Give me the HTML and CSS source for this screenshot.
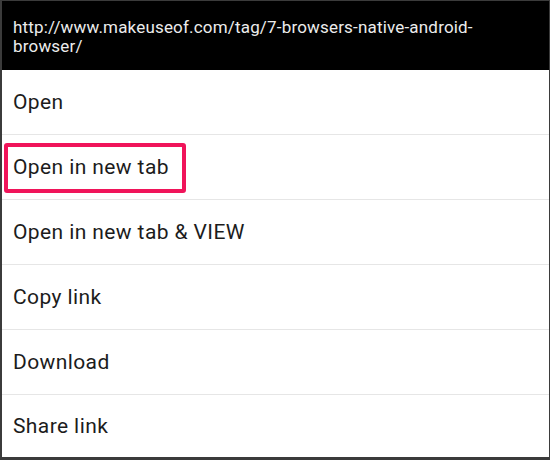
FILE: index.html
```html
<!DOCTYPE html>
<html>
<head>
<meta charset="utf-8">
<link rel="stylesheet" href="styles.css">
</head>
<body>
<div class="dialog">
  <div class="title">http://www.makeuseof.com/tag/7-browsers-native-android-<br>browser/</div>
  <ul class="menu">
    <li class="item">Open</li>
    <li class="item highlighted">Open in new tab<span class="mark"></span></li>
    <li class="item">Open in new tab &amp; VIEW</li>
    <li class="item">Copy link</li>
    <li class="item">Download</li>
    <li class="item">Share link</li>
  </ul>
</div>
</body>
</html>
```

FILE: styles.css
```css
html, body {
  margin: 0;
  padding: 0;
}
body {
  width: 550px;
  height: 460px;
  background: #3b3b3b;
  overflow: hidden;
  font-family: Roboto, "Noto Sans", sans-serif;
}
.dialog {
  margin: 1px 1px 0 2px;
  height: 456px;
  display: flex;
  flex-direction: column;
  background: #fff;
}
.title {
  background: #000;
  color: #ececec;
  height: 69px;
  box-sizing: border-box;
  padding: 17px 0 0 11px;
  font-size: 17px;
  line-height: 19px;
  letter-spacing: 0.18px;
}
.menu {
  list-style: none;
  margin: 0;
  padding: 0;
  flex: 1;
  display: flex;
  flex-direction: column;
}
.item {
  position: relative;
  height: 64px;
  flex: none;
  display: flex;
  align-items: center;
  padding-left: 11px;
  font-size: 21px;
  letter-spacing: 0.4px;
  color: #1c1c1c;
  border-top: 1px solid #e6e6e6;
}
.item:first-child {
  border-top: none;
}
.item:last-child {
  flex: 1;
  height: auto;
}
.mark {
  position: absolute;
  left: 2px;
  top: 8px;
  width: 182px;
  height: 50px;
  box-sizing: border-box;
  border: 4px solid #f0145a;
  border-radius: 3px;
}
```
